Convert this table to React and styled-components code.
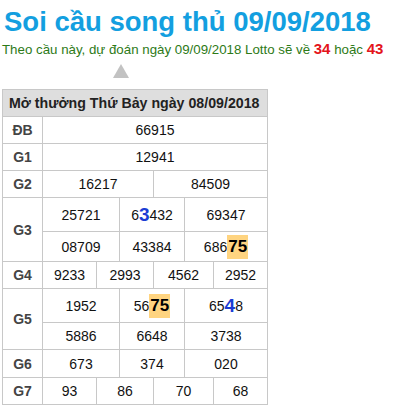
import React from "react";
import styled, { createGlobalStyle } from "styled-components";

const Global = createGlobalStyle`
  html, body { margin: 0; padding: 0; background: #fff; }
  body { font-family: "Liberation Sans", Arial, sans-serif; }
`;

const Page = styled.div`
  padding-left: 2px;
  width: 403px;
`;

const Title = styled.h1`
  margin: 0;
  padding: 6px 0 0 2px;
  font-size: 27.5px;
  line-height: 31px;
  font-weight: bold;
  color: #139fe0;
  white-space: nowrap;
`;

const Subtitle = styled.p`
  margin: 3px 0 0 0;
  height: 19px;
  font-size: 13.3px;
  line-height: 18px;
  color: #2d7a17;
  white-space: nowrap;
`;

const Predict = styled.b`
  color: #e4141b;
  font-size: 15px;
`;

const Pointer = styled.div`
  padding: 5px 0 11px 111px;
  line-height: 0;
`;

const Table = styled.div`
  width: 264px;
  background: #c8c8c8;
  padding: 1px;
  display: grid;
  row-gap: 1px;
`;

const Header = styled.div`
  background: #dedede;
  height: 26px;
  line-height: 26px;
  padding-left: 6px;
  font-size: 14.2px;
  font-weight: bold;
  color: #222;
  white-space: nowrap;
`;

const Row = styled.div`
  display: grid;
  grid-template-columns: 39px 224px;
  column-gap: 1px;
`;

const Label = styled.div`
  background: #fff;
  display: flex;
  align-items: center;
  justify-content: center;
  font-size: 14px;
  font-weight: bold;
  color: #444;
`;

const Cells = styled.div`
  display: grid;
  grid-template-columns: ${(p) => p.$cols};
  grid-template-rows: ${(p) => p.$rows};
  gap: 1px;
`;

const Cell = styled.div`
  background: #fff;
  display: flex;
  align-items: center;
  justify-content: center;
  font-size: 14px;
  color: #111;
  white-space: nowrap;
`;

const Big = styled.b`
  color: #1c3dd4;
  font-size: 19px;
`;

const Hit = styled.b`
  background: #ffd480;
  color: #000;
  font-size: 17px;
  padding: 2px 1px;
`;

const COLS = {
  1: "224px",
  2: "110px 113px",
  3: "76px 64px 82px",
  4: "53px 56px 59px 53px",
};

const rows = [
  { label: "ĐB", n: 1, heights: [26], cells: ["66915"] },
  { label: "G1", n: 1, heights: [26], cells: ["12941"] },
  { label: "G2", n: 2, heights: [26], cells: ["16217", "84509"] },
  {
    label: "G3",
    n: 3,
    heights: [33, 29],
    cells: [
      "25721",
      <>6<Big>3</Big>432</>,
      "69347",
      "08709",
      "43384",
      <>686<Hit>75</Hit></>,
    ],
  },
  { label: "G4", n: 4, heights: [26], cells: ["9233", "2993", "4562", "2952"] },
  {
    label: "G5",
    n: 3,
    heights: [33, 26],
    cells: [
      "1952",
      <>56<Hit>75</Hit></>,
      <>65<Big>4</Big>8</>,
      "5886",
      "6648",
      "3738",
    ],
  },
  { label: "G6", n: 3, heights: [27], cells: ["673", "374", "020"] },
  { label: "G7", n: 4, heights: [26], cells: ["93", "86", "70", "68"] },
];

export default function App() {
  return (
    <Page>
      <Global />
      <Title>Soi cầu song thủ 09/09/2018</Title>
      <Subtitle>
        Theo cầu này, dự đoán ngày 09/09/2018 Lotto sẽ về <Predict>34</Predict> hoặc{" "}
        <Predict>43</Predict>
      </Subtitle>
      <Pointer>
        <svg width="16" height="14" viewBox="0 0 16 14">
          <polygon points="8,0 16,14 0,14" fill="#c2c2c2" />
        </svg>
      </Pointer>
      <Table>
        <Header>Mở thưởng Thứ Bảy ngày 08/09/2018</Header>
        {rows.map((r) => (
          <Row key={r.label}>
            <Label>{r.label}</Label>
            <Cells $cols={COLS[r.n]} $rows={r.heights.map((h) => h + "px").join(" ")}>
              {r.cells.map((c, i) => (
                <Cell key={i}>{c}</Cell>
              ))}
            </Cells>
          </Row>
        ))}
      </Table>
    </Page>
  );
}
